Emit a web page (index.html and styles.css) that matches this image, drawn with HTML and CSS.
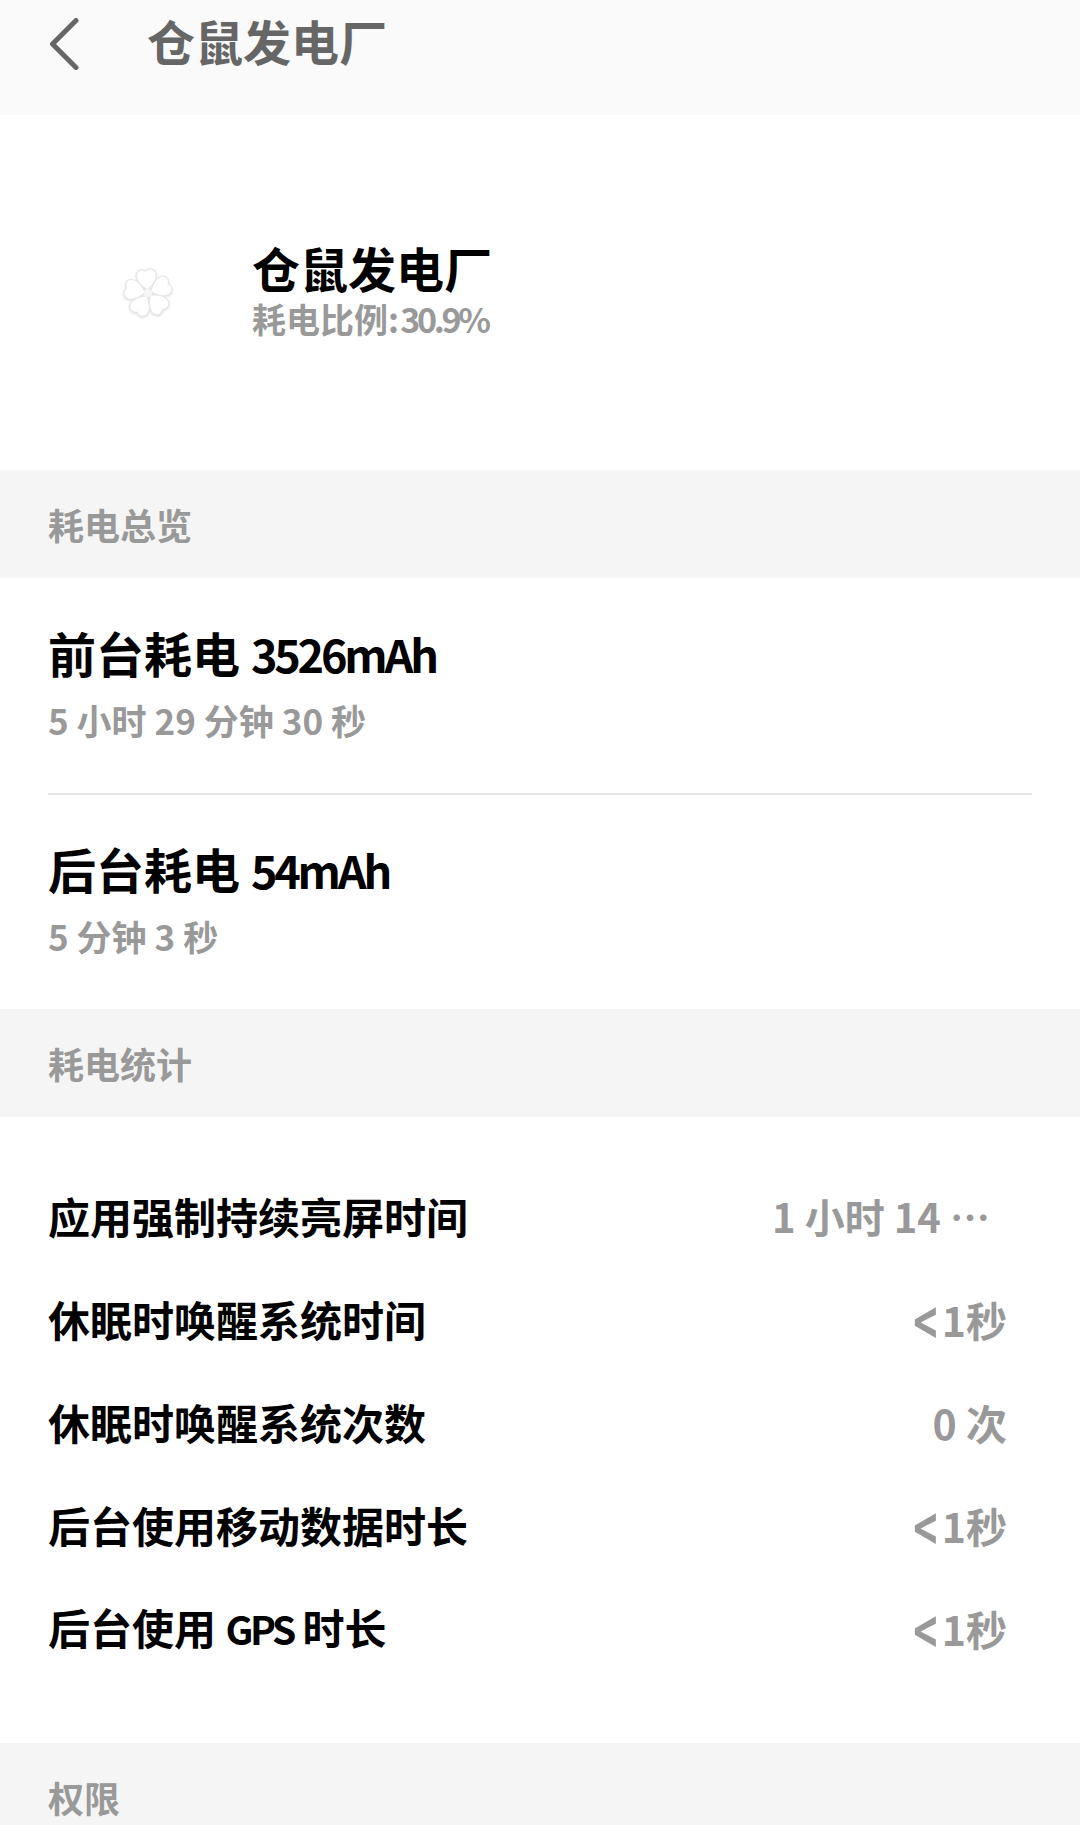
FILE: index.html
```html
<!DOCTYPE html>
<html lang="zh-CN">
<head>
<meta charset="utf-8">
<title>仓鼠发电厂</title>
<link rel="stylesheet" href="styles.css">
</head>
<body>
<div class="page">
  <header class="topbar">
    <svg class="back" width="30" height="52" viewBox="0 0 30 52" aria-hidden="true"><path d="M27 2.5 L3.5 26 L27 49.500" fill="none" stroke="#666" stroke-width="5" stroke-linecap="round" stroke-linejoin="round"/></svg>
    <h1 class="topbar-title">仓鼠发电厂</h1>
  </header>
  <section class="hero">
    <svg class="flower" width="52" height="56" viewBox="0 0 52 56" aria-hidden="true">
      <defs>
        <g id="petal"><path d="M26 24 C20.500 20 16 15 16 9 C16.500 3.500 22.500 1.500 26 5 C29.500 1.500 35.500 3.500 36 9 C36 15 31.500 20 26 24 Z" fill="#fff" stroke="#e6e6e6" stroke-width="1.200"/></g>
      </defs>
      <g transform="rotate(-6 26 28) translate(0 1)">
        <use href="#petal"/>
        <use href="#petal" transform="rotate(72 26 27)"/>
        <use href="#petal" transform="rotate(144 26 27)"/>
        <use href="#petal" transform="rotate(216 26 27)"/>
        <use href="#petal" transform="rotate(288 26 27)"/>
        <circle cx="26" cy="27" r="4" fill="#f6f6f6"/>
      </g>
    </svg>
    <div class="hero-text">
      <div class="hero-name">仓鼠发电厂</div>
      <div class="hero-sub">耗电比例<span class="tight-sub">: 30.9%</span></div>
    </div>
  </section>
  <h2 class="section-head">耗电总览</h2>
  <section class="overview">
    <div class="usage usage-first">
      <div class="usage-title">前台耗电 <span class="tight-title">3526mAh</span></div>
      <div class="usage-sub">5 小时 29 分钟 30 秒</div>
    </div>
    <div class="usage usage-last">
      <div class="usage-title">后台耗电 <span class="tight-title">54mAh</span></div>
      <div class="usage-sub">5 分钟 3 秒</div>
    </div>
  </section>
  <h2 class="section-head">耗电统计</h2>
  <section class="stats">
    <div class="stat"><span class="stat-label">应用强制持续亮屏时间</span><span class="stat-value stat-value-cut">1 小时 14 …</span></div>
    <div class="stat"><span class="stat-label">休眠时唤醒系统时间</span><span class="stat-value stat-value-tight"><span class="lt">&lt;</span> 1秒</span></div>
    <div class="stat"><span class="stat-label">休眠时唤醒系统次数</span><span class="stat-value">0 次</span></div>
    <div class="stat"><span class="stat-label">后台使用移动数据时长</span><span class="stat-value stat-value-tight"><span class="lt">&lt;</span> 1秒</span></div>
    <div class="stat"><span class="stat-label">后台使用 <span class="tight-gps">GPS</span> 时长</span><span class="stat-value stat-value-tight"><span class="lt">&lt;</span> 1秒</span></div>
  </section>
  <h2 class="section-head">权限</h2>
</div>
</body>
</html>
```
FILE: styles.css
```css
* { box-sizing: border-box; }
html, body { margin: 0; padding: 0; }
body {
  background: #fff;
  font-family: "Noto Sans CJK SC", "Noto Sans", sans-serif;
}
.page { width: 1080px; height: 1825px; overflow: hidden; }
.topbar {
  height: 115px;
  background: #fafafa;
  display: flex;
  align-items: flex-start;
  padding: 18px 0 0 49px;
}
.back { flex: none; }
.topbar-title {
  margin: -3px 0 0 68px;
  font-size: 48px;
  line-height: 50px;
  font-weight: 700;
  color: #666;
}
.hero {
  height: 355px;
  display: flex;
  align-items: center;
  padding: 0 0 0 122px;
}
.flower { flex: none; margin-top: 1px; filter: drop-shadow(0 1px 1px rgba(0, 0, 0, 0.12)); }
.hero-text { margin-left: 78px; padding-bottom: 8px; }
.hero-name {
  margin-bottom: 6px;
  font-size: 48px;
  line-height: 54px;
  font-weight: 700;
  color: #000;
}
.hero-sub {
  font-size: 34px;
  line-height: 38px;
  font-weight: 700;
  color: #999;
}
.tight-sub { letter-spacing: -3.300px; }
.section-head {
  margin: 0;
  height: 108px;
  padding: 31px 0 0 48px;
  background: #f5f5f5;
  font-size: 36px;
  line-height: 46px;
  font-weight: 700;
  color: #999;
}
.overview { padding: 0 48px; height: 431px; }
.usage-first { height: 217px; padding-top: 44px; border-bottom: 2px solid #e6e6e6; }
.usage-last { height: 214px; padding-top: 43px; }
.usage-title {
  font-size: 48px;
  line-height: 60px;
  font-weight: 700;
  color: #000;
}
.tight-title { font-size: 45px; letter-spacing: -3.200px; }
.usage-sub {
  margin-top: 13px;
  font-size: 35px;
  line-height: 46px;
  font-weight: 700;
  color: #999;
}
.stats { height: 626px; padding-top: 47px; }
.stat {
  height: 103px;
  display: flex;
  align-items: center;
  justify-content: space-between;
  padding: 0 73px 0 48px;
}
.stat-label {
  font-size: 42px;
  line-height: 56px;
  font-weight: 700;
  color: #000;
}
.tight-gps { font-size: 39px; letter-spacing: -3.500px; }
.stat-value {
  font-size: 41px;
  line-height: 56px;
  font-weight: 700;
  color: #999;
  white-space: nowrap;
}
.stat-value-tight { word-spacing: -5px; }
.lt { display: inline-block; transform: scaleY(1.5); }
.stat-value-cut { margin-right: 17px; font-size: 40px; }
```
